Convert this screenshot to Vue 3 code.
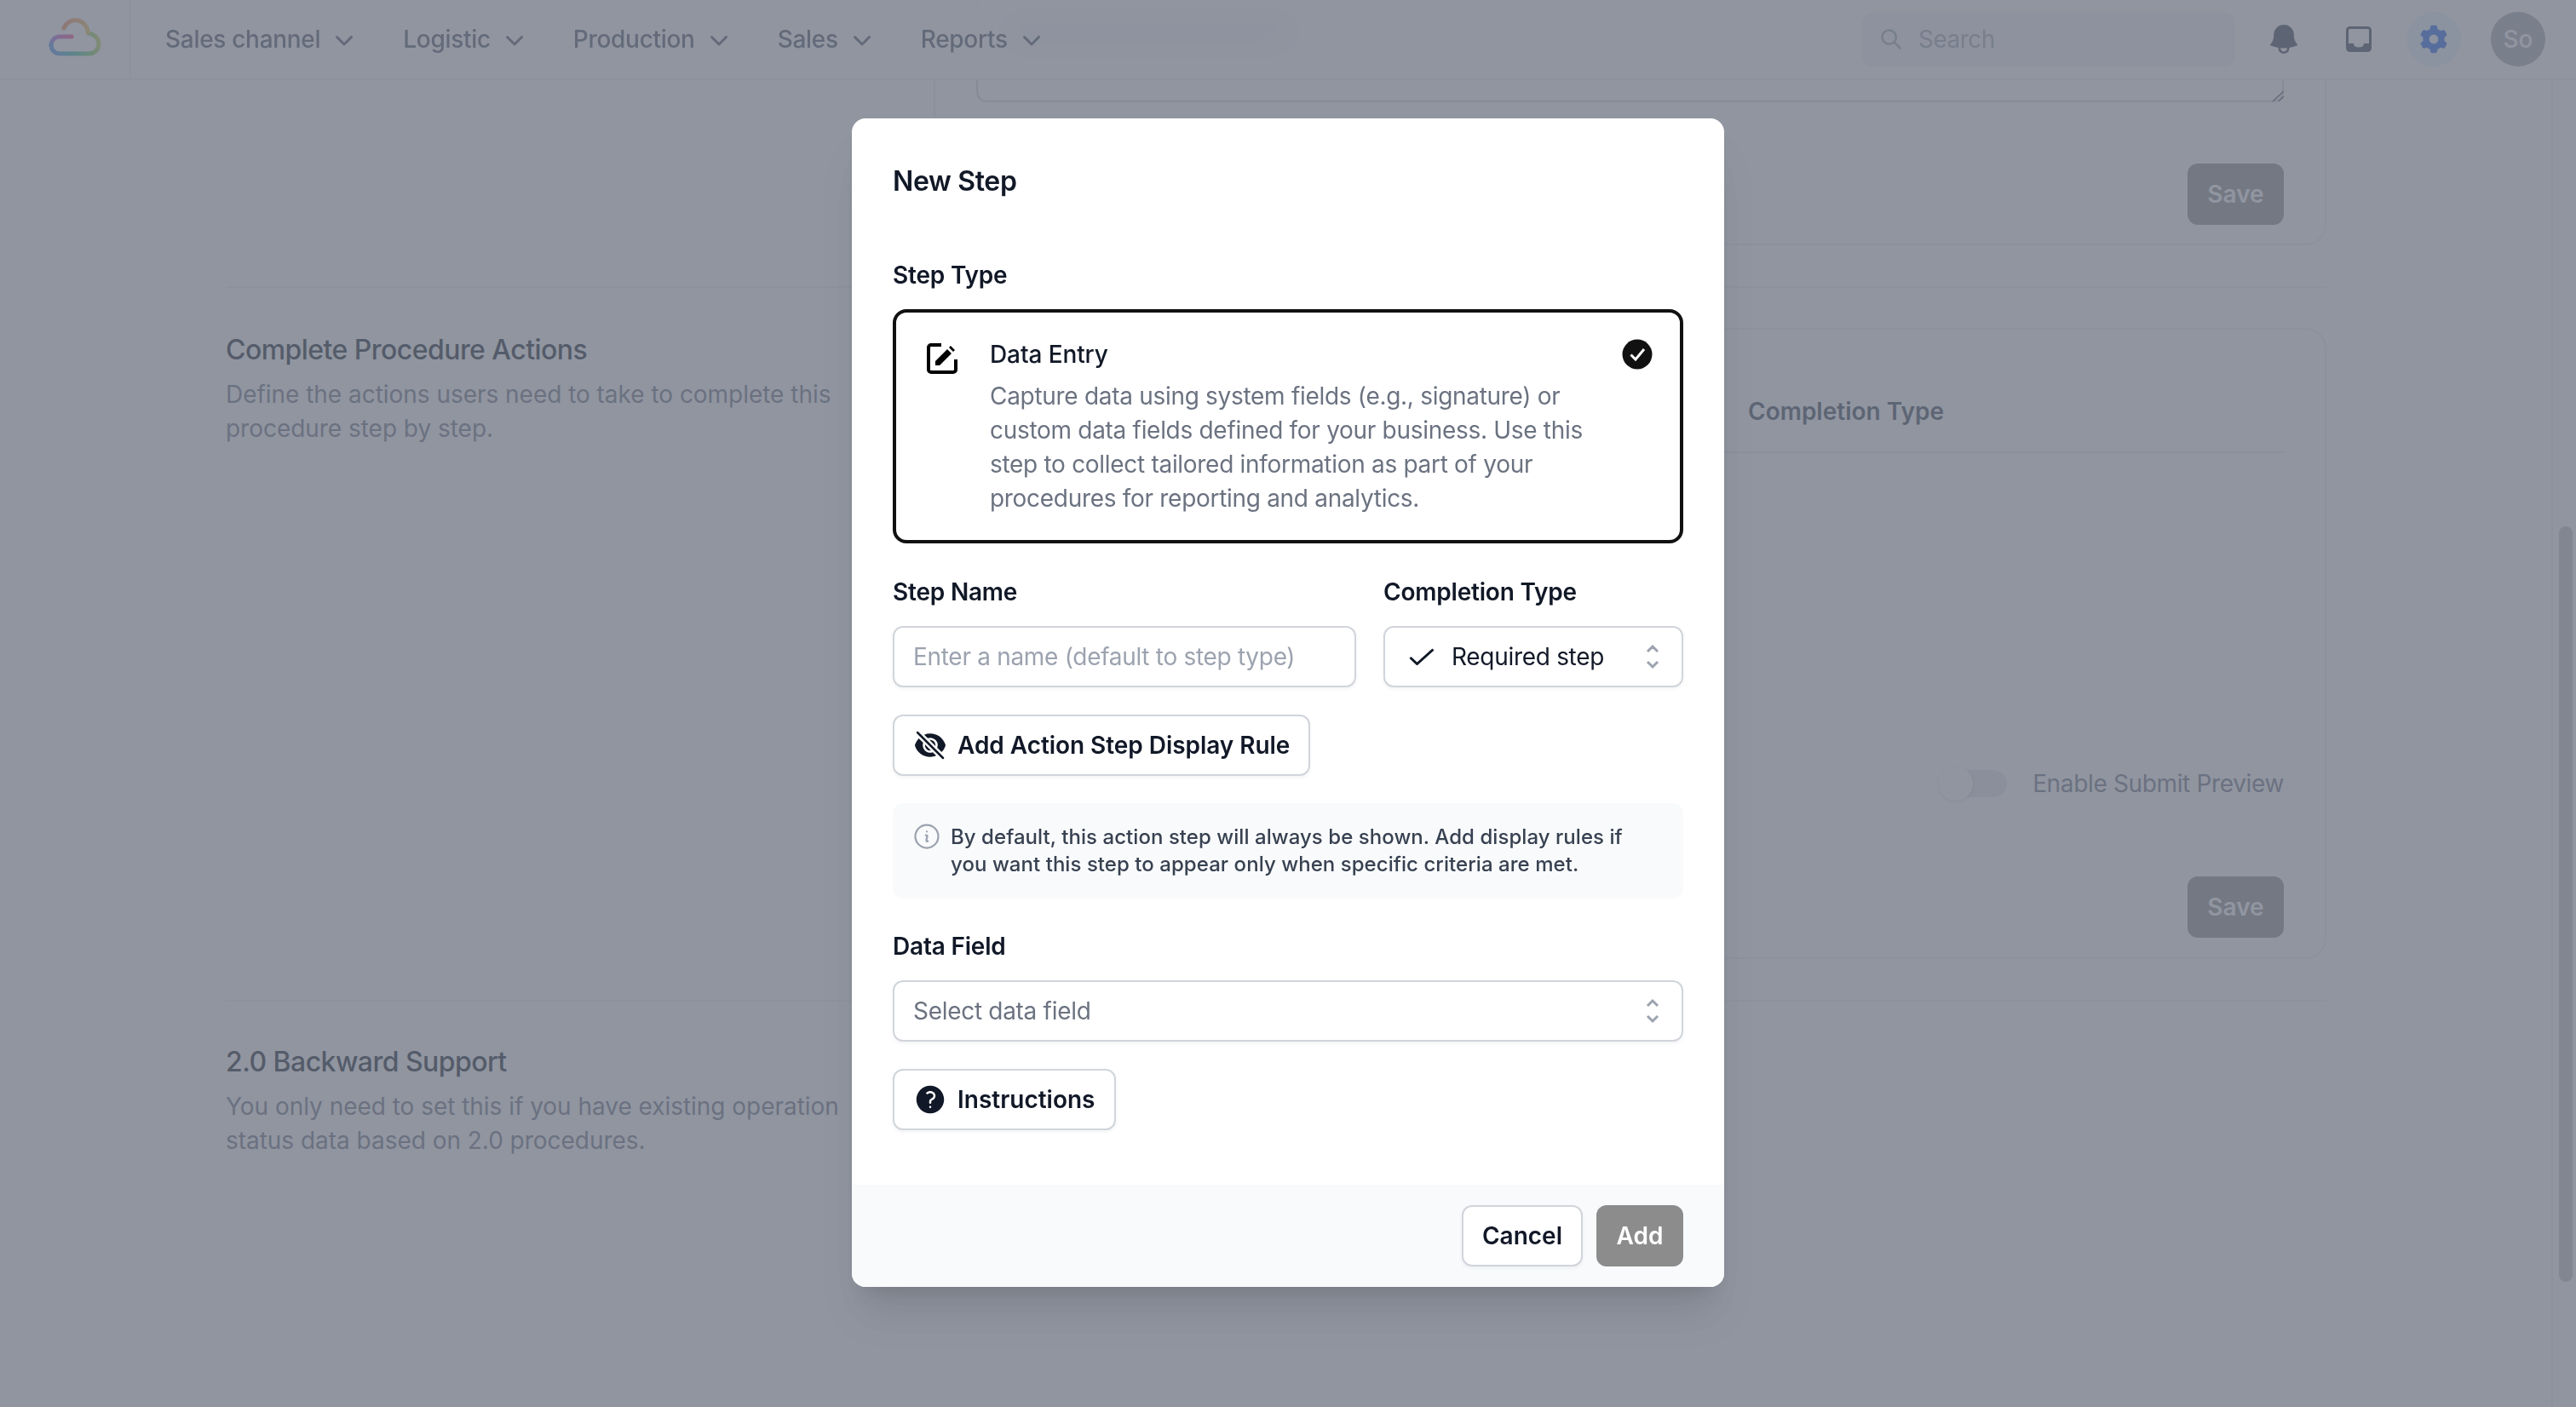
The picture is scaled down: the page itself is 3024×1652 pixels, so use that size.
<template>
  <div class="page">
    <header class="topbar">
      <div class="logo-cell">
        <svg class="logo" width="68" height="48" viewBox="0 0 68 48" fill="none" stroke-width="5" stroke-linecap="round">
          <defs>
            <linearGradient id="barGrad" x1="30" y1="23" x2="2" y2="33" gradientUnits="userSpaceOnUse">
              <stop offset="0" stop-color="#ff3f86" />
              <stop offset="0.6" stop-color="#c55fd0" />
              <stop offset="1" stop-color="#6f8df0" />
            </linearGradient>
            <linearGradient id="bottomGrad" x1="4" y1="43" x2="62" y2="30" gradientUnits="userSpaceOnUse">
              <stop offset="0" stop-color="#4f8ff0" />
              <stop offset="0.45" stop-color="#35c0a0" />
              <stop offset="0.8" stop-color="#7fd060" />
              <stop offset="1" stop-color="#d5d35a" />
            </linearGradient>
            <linearGradient id="topGrad" x1="17" y1="13" x2="46" y2="18" gradientUnits="userSpaceOnUse">
              <stop offset="0" stop-color="#f88a5a" />
              <stop offset="1" stop-color="#f2c15a" />
            </linearGradient>
          </defs>
          <path d="M27 23H13a10 10 0 0 0-10 10" stroke="url(#barGrad)" />
          <path d="M3 33a10 10 0 0 0 10 10H48a11 11 0 0 0 11-11c0-7-5-12-12-13" stroke="url(#bottomGrad)" />
          <path d="M46 18A14.500 14.500 0 0 0 18 13" stroke="url(#topGrad)" />
        </svg>
      </div>
      <nav class="nav-links">
        <a v-for="item in navItems" :key="item" class="nav-link">
          {{ item }}
          <svg width="40" height="40" viewBox="0 0 20 20" fill="currentColor">
            <path fill-rule="evenodd" clip-rule="evenodd" d="M5.220 8.220a.75.75 0 0 1 1.060 0L10 11.940l3.720-3.720a.75.75 0 1 1 1.060 1.060l-4.250 4.250a.75.75 0 0 1-1.060 0L5.220 9.280a.75.75 0 0 1 0-1.060Z" />
          </svg>
        </a>
      </nav>
      <div class="top-right">
        <div class="search">
          <svg width="28" height="28" viewBox="0 0 24 24" fill="none" stroke="currentColor" stroke-width="2.200">
            <circle cx="10" cy="10" r="7" />
            <path d="M15.200 15.200 21 21" stroke-linecap="round" />
          </svg>
          <span>Search</span>
        </div>
        <svg class="bell" width="42" height="42" viewBox="0 0 24 24" fill="currentColor">
          <path fill-rule="evenodd" clip-rule="evenodd" d="M5.250 9a6.750 6.750 0 0 1 13.500 0v.75c0 2.123.8 4.057 2.118 5.520a.75.75 0 0 1-.297 1.206c-1.544.57-3.160.99-4.831 1.243a3.750 3.750 0 1 1-7.480 0 24.585 24.585 0 0 1-4.831-1.244.75.75 0 0 1-.298-1.205A8.217 8.217 0 0 0 5.250 9.750V9Zm4.502 8.900a2.250 2.250 0 1 0 4.496 0 25.057 25.057 0 0 1-4.496 0Z" />
        </svg>
        <svg class="inbox" width="30" height="30" viewBox="0 0 30 30" fill="none">
          <rect x="1.500" y="1.500" width="27" height="27" rx="3" stroke="currentColor" stroke-width="3" />
          <path d="M2 20h7c0 3 2 4.500 6 4.500s6-1.500 6-4.500h7v8H2z" fill="currentColor" />
        </svg>
        <div class="gear-wrap">
          <svg width="36" height="36" viewBox="0 0 20 20" fill="currentColor">
            <path fill-rule="evenodd" clip-rule="evenodd" d="M7.840 1.804A1 1 0 0 1 8.820 1h2.360a1 1 0 0 1 .98.804l.331 1.652a6.993 6.993 0 0 1 1.929 1.115l1.598-.54a1 1 0 0 1 1.186.447l1.180 2.044a1 1 0 0 1-.205 1.251l-1.267 1.113a7.047 7.047 0 0 1 0 2.228l1.267 1.113a1 1 0 0 1 .206 1.250l-1.180 2.045a1 1 0 0 1-1.187.447l-1.598-.54a6.993 6.993 0 0 1-1.929 1.115l-.33 1.652a1 1 0 0 1-.98.804H8.820a1 1 0 0 1-.98-.804l-.331-1.652a6.993 6.993 0 0 1-1.929-1.115l-1.598.54a1 1 0 0 1-1.186-.447l-1.180-2.044a1 1 0 0 1 .205-1.251l1.267-1.114a7.050 7.050 0 0 1 0-2.227L1.821 7.773a1 1 0 0 1-.206-1.250l1.180-2.045a1 1 0 0 1 1.187-.447l1.598.54A6.992 6.992 0 0 1 7.510 3.456l.33-1.652ZM10 13a3 3 0 1 0 0-6 3 3 0 0 0 0 6Z" />
          </svg>
        </div>
        <div class="avatar">So</div>
      </div>
    </header>

    <div class="main">
      <div class="content">
        <section class="section">
          <div></div>
          <div class="card top-card">
            <div class="textarea-wrap">
              <textarea class="textarea" readonly></textarea>
              <span class="hidden-line"></span>
              <svg class="resize-handle" width="14" height="14" viewBox="0 0 14 14" fill="none" stroke="#4b5563" stroke-width="1.500">
                <path d="M1 13 14 1M8 13l6-6" />
              </svg>
            </div>
            <div class="save-row"><button class="save">Save</button></div>
          </div>
        </section>

        <section class="section">
          <div class="actions-text">
            <h3 class="section-title">Complete Procedure Actions</h3>
            <p class="section-desc">Define the actions users need to take to complete this procedure step by step.</p>
          </div>
          <div class="card steps-card">
            <div class="table-head"><span>Completion Type</span></div>
            <div class="preview-row">
              <span class="toggle"><span class="knob"></span></span>
              <span>Enable Submit Preview</span>
            </div>
            <div class="save-row steps-save"><button class="save">Save</button></div>
          </div>
        </section>

        <section class="section last">
          <div>
            <h3 class="section-title">2.0 Backward Support</h3>
            <p class="section-desc">You only need to set this if you have existing operation status data based on 2.0 procedures.</p>
          </div>
          <div></div>
        </section>
      </div>
      <div class="scroll-track"><div class="scroll-thumb"></div></div>
    </div>

    <div class="overlay">
      <div class="modal">
        <div class="modal-body">
          <h2 class="modal-title">New Step</h2>

          <label class="label step-type-label">Step Type</label>
          <div class="type-card">
            <svg class="type-icon" width="36" height="36" viewBox="0 0 36 36" fill="none">
              <path d="M17 2H5a3 3 0 0 0-3 3v26a3 3 0 0 0 3 3h26a3 3 0 0 0 3-3V19" stroke="#000" stroke-width="4" />
              <path d="M10 26v-5L24 7l5 5-14 14zM26 5l2-2 5 5-2 2z" fill="#000" />
            </svg>
            <div class="type-text">
              <div class="type-name">Data Entry</div>
              <p class="type-desc">Capture data using system fields (e.g., signature) or custom data fields defined for your business. Use this step to collect tailored information as part of your procedures for reporting and analytics.</p>
            </div>
            <svg class="type-check" width="36" height="36" viewBox="0 0 36 36">
              <circle cx="18" cy="18" r="17.500" fill="#111" />
              <path d="M10.500 18.500l5.500 5.500 10-12" fill="none" stroke="#fff" stroke-width="3" />
            </svg>
          </div>

          <div class="field-row">
            <div>
              <label class="label">Step Name</label>
              <input class="input" placeholder="Enter a name (default to step type)" />
            </div>
            <div>
              <label class="label">Completion Type</label>
              <div class="input select">
                <svg class="req-check" width="30" height="20" viewBox="0 0 30 20" fill="none" stroke="#111827" stroke-width="3">
                  <path d="M1.500 11l8 7.500L28.500 1.500" />
                </svg>
                <span class="select-value">Required step</span>
                <svg class="updown" width="16" height="32" viewBox="0 0 16 32" fill="none" stroke="#9ca3af" stroke-width="3">
                  <path d="M2 10l6-6 6 6M2 22l6 6 6-6" />
                </svg>
              </div>
            </div>
          </div>

          <button class="btn rule-btn">
            <svg width="40" height="40" viewBox="0 0 24 24" fill="#111827">
              <path d="M3.530 2.470a.75.75 0 0 0-1.060 1.060l18 18a.75.75 0 1 0 1.060-1.060l-18-18ZM22.676 12.553a11.249 11.249 0 0 1-2.631 4.310l-3.099-3.099a5.250 5.250 0 0 0-6.710-6.710L7.759 4.577a11.217 11.217 0 0 1 4.242-.827c4.970 0 9.185 3.223 10.675 7.690.12.362.12.752 0 1.113Z" />
              <path d="M15.750 12c0 .18-.013.357-.037.53l-4.244-4.243A3.750 3.750 0 0 1 15.750 12ZM12.530 15.713l-4.243-4.244a3.750 3.750 0 0 0 4.243 4.243Z" />
              <path d="M6.750 12c0-.619.107-1.213.304-1.764l-3.100-3.100a11.250 11.250 0 0 0-2.630 4.310c-.12.362-.12.752 0 1.114 1.489 4.467 5.704 7.690 10.675 7.690 1.500 0 2.933-.294 4.242-.827l-2.477-2.477A5.250 5.250 0 0 1 6.750 12Z" />
            </svg>
            Add Action Step Display Rule
          </button>

          <div class="info">
            <svg width="36" height="36" viewBox="0 0 24 24" fill="none" stroke="#9ca3af" stroke-width="1.500" stroke-linecap="round" stroke-linejoin="round">
              <path d="m11.250 11.250.041-.02a.75.75 0 0 1 1.063.852l-.708 2.836a.75.75 0 0 0 1.063.853l.041-.021M21 12a9 9 0 1 1-18 0 9 9 0 0 1 18 0Zm-9-3.750h.008v.008H12V8.250Z" />
            </svg>
            <p>By default, this action step will always be shown. Add display rules if you want this step to appear only when specific criteria are met.</p>
          </div>

          <label class="label data-label">Data Field</label>
          <div class="input select data-select">
            <span>Select data field</span>
            <svg class="updown" width="16" height="32" viewBox="0 0 16 32" fill="none" stroke="#9ca3af" stroke-width="3">
              <path d="M2 10l6-6 6 6M2 22l6 6 6-6" />
            </svg>
          </div>

          <button class="btn help-btn">
            <svg width="40" height="40" viewBox="0 0 24 24" fill="#111827">
              <path fill-rule="evenodd" clip-rule="evenodd" d="M2.250 12c0-5.385 4.365-9.750 9.750-9.750s9.750 4.365 9.750 9.750-4.365 9.750-9.750 9.750S2.250 17.385 2.250 12Zm11.378-3.917c-.89-.777-2.366-.777-3.255 0a.75.75 0 0 1-.988-1.129c1.454-1.272 3.776-1.272 5.230 0 1.513 1.324 1.513 3.518 0 4.842a3.750 3.750 0 0 1-.837.552c-.676.328-1.028.774-1.028 1.152v.75a.75.75 0 0 1-1.500 0v-.75c0-1.279 1.060-2.107 1.875-2.502.182-.088.351-.199.503-.331.83-.727.83-1.857 0-2.584ZM12 18a.75.75 0 1 0 0-1.500.75.75 0 0 0 0 1.500Z" />
            </svg>
            Instructions
          </button>
        </div>
        <div class="modal-footer">
          <button class="btn cancel">Cancel</button>
          <button class="add">Add</button>
        </div>
      </div>
    </div>
  </div>
</template>

<script setup>
const navItems = ["Sales channel", "Logistic", "Production", "Sales", "Reports"];
</script>

<style>
html,
body {
  margin: 0;
  overflow: hidden;
}
</style>

<style scoped>
* {
  box-sizing: border-box;
}

.page {
  position: relative;
  width: 3024px;
  height: 1652px;
  overflow: hidden;
  background: #fff;
  font-family: Inter, "Noto Sans", sans-serif;
  font-size: 28px;
  line-height: 40px;
  color: #111827;
}

.topbar {
  position: absolute;
  top: 0;
  left: 0;
  right: 0;
  z-index: 2;
  height: 94px;
  display: flex;
  align-items: center;
  border-bottom: 2px solid #eceef1;
  background: rgba(255, 255, 255, 0.82);
  backdrop-filter: blur(20px);
}

.logo-cell {
  width: 154px;
  height: 100%;
  padding: 20px 0 0 57px;
  border-right: 2px solid #eceef1;
}

.logo {
  display: block;
}

.nav-links {
  display: flex;
  gap: 49px;
  margin-left: 40px;
}

.nav-link {
  display: flex;
  align-items: center;
  gap: 8px;
  color: #4b5563;
  font-weight: 500;
  letter-spacing: -0.3px;
}

.top-right {
  display: flex;
  align-items: center;
  margin-left: auto;
  padding-right: 36px;
}

.search {
  display: flex;
  align-items: center;
  gap: 18px;
  width: 438px;
  height: 63px;
  padding-left: 20px;
  margin-right: 36px;
  border-radius: 12px;
  background: #f3f4f6;
  color: #9ca3af;
  letter-spacing: -0.5px;
}

.bell {
  color: #374151;
}

.inbox {
  margin-left: 52px;
  color: #374151;
}

.gear-wrap {
  display: flex;
  align-items: center;
  justify-content: center;
  width: 64px;
  height: 64px;
  margin-left: 41px;
  border-radius: 50%;
  background: #eff6ff;
  color: #1c62f0;
}

.avatar {
  display: flex;
  align-items: center;
  justify-content: center;
  width: 64px;
  height: 64px;
  margin-left: 35px;
  border-radius: 50%;
  background: #a6a6b0;
  color: #fff;
  font-weight: 500;
}

.main {
  display: flex;
  height: 100%;
}

.content {
  flex: 1;
  margin-top: -120px;
  padding: 0 264px 0 265px;
}

.section {
  display: grid;
  grid-template-columns: 783px 1fr;
  column-gap: 48px;
  padding: 47px 0 48px;
  border-bottom: 2px solid #f0f1f3;
}

.section:first-child {
  padding-top: 0;
}

.section.last {
  border-bottom: 0;
}

.actions-text {
  margin-top: 2px;
}

.section-title {
  margin: 0;
  font-size: 32px;
  line-height: 48px;
  font-weight: 500;
  letter-spacing: -0.55px;
}

.section-desc {
  margin: 8px 0 0;
  color: #6b7280;
  letter-spacing: -0.03px;
}

.card {
  border: 2px solid #eceef1;
  border-radius: 24px;
  padding: 0 48px;
}

.top-card {
  padding-top: 58px;
  padding-bottom: 22px;
}

.textarea-wrap {
  position: relative;
  height: 180px;
}

.textarea {
  display: block;
  width: 100%;
  height: 100%;
  border: 2px solid #d1d5db;
  border-radius: 12px;
  background: #fff;
  outline: none;
  resize: none;
}

.hidden-line {
  position: absolute;
  left: 32px;
  top: 88px;
  width: 340px;
  height: 22px;
  background: #9ca3af;
}

.resize-handle {
  position: absolute;
  right: 0;
  bottom: 0;
}

.save-row {
  display: flex;
  justify-content: flex-end;
  margin-top: 72px;
}

.save {
  width: 113px;
  height: 72px;
  padding: 0;
  border: 0;
  border-radius: 12px;
  background: #8c8c8c;
  color: #fff;
  font: 600 28px/40px Inter, sans-serif;
}

.steps-card {
  padding-top: 48px;
  padding-bottom: 23px;
}

.table-head {
  height: 97px;
  padding-left: 906px;
  padding-top: 28px;
  border-bottom: 2px solid #e5e7eb;
  font-weight: 600;
  color: #374151;
}

.preview-row {
  display: flex;
  align-items: center;
  justify-content: flex-end;
  gap: 30px;
  margin-top: 368px;
  color: #6b7280;
  letter-spacing: -0.35px;
}

.toggle {
  position: relative;
  width: 76px;
  height: 32px;
  border-radius: 16px;
  background: #e5e7eb;
}

.knob {
  position: absolute;
  left: -4px;
  top: -4px;
  width: 40px;
  height: 40px;
  border-radius: 50%;
  background: #fff;
  box-shadow: 0 1px 4px rgba(0, 0, 0, 0.15);
}

.steps-save {
  margin-top: 89px;
}

.scroll-track {
  width: 29px;
  margin-top: 94px;
  padding: 524px 6px 0 7px;
  border-left: 2px solid #eceef1;
}

.scroll-thumb {
  width: 16px;
  height: 887px;
  border-radius: 8px;
  background: #c1c1c1;
}

.overlay {
  position: absolute;
  inset: 0;
  z-index: 3;
  display: flex;
  align-items: center;
  justify-content: center;
  padding-bottom: 2px;
  background: rgba(107, 114, 128, 0.75);
}

.modal {
  width: 1024px;
  border-radius: 16px;
  overflow: hidden;
  background: #fff;
  box-shadow: 0 40px 50px -10px rgba(0, 0, 0, 0.1), 0 16px 20px -12px rgba(0, 0, 0, 0.1);
}

.modal-body {
  padding: 50px 48px 64px;
}

.modal-title {
  margin: 0;
  font-size: 32px;
  line-height: 48px;
  font-weight: 600;
  letter-spacing: -0.35px;
}

.label {
  display: block;
  font-weight: 600;
  letter-spacing: -0.2px;
}

.step-type-label {
  margin-top: 66px;
}

.type-card {
  display: flex;
  align-items: flex-start;
  height: 275px;
  margin-top: 20px;
  padding: 29px 32px 0 36px;
  border: 4px solid #111;
  border-radius: 16px;
}

.type-icon {
  margin-top: 7px;
  flex: none;
}

.type-text {
  width: 720px;
  margin-left: 38px;
  letter-spacing: -0.3px;
}

.type-name {
  font-weight: 500;
  letter-spacing: -0.1px;
}

.type-desc {
  margin: 9px 0 0;
  color: #6b7280;
}

.type-check {
  margin-left: auto;
  margin-top: 2px;
}

.field-row {
  display: grid;
  grid-template-columns: 544px 352px;
  column-gap: 32px;
  margin-top: 37px;
}

.input {
  display: block;
  width: 100%;
  height: 72px;
  margin-top: 20px;
  padding: 0 22px;
  border: 2px solid #d1d5db;
  border-radius: 12px;
  background: #fff;
  box-shadow: 0 2px 4px rgba(0, 0, 0, 0.05);
  font: 400 28px/40px Inter, sans-serif;
  letter-spacing: -0.3px;
  color: #111827;
  outline: none;
}

.input::placeholder {
  color: #9ca3af;
  opacity: 1;
}

.select {
  display: flex;
  align-items: center;
  padding-left: 28px;
  padding-right: 26px;
}

.select-value {
  margin-left: 20px;
}

.updown {
  margin-left: auto;
}

.btn {
  display: inline-flex;
  align-items: center;
  gap: 12px;
  height: 72px;
  border: 2px solid #d1d5db;
  border-radius: 12px;
  background: #fff;
  box-shadow: 0 2px 4px rgba(0, 0, 0, 0.05);
  font: 600 28px/40px Inter, sans-serif;
  color: #111827;
}

.rule-btn {
  margin-top: 32px;
  padding: 0 22px;
  letter-spacing: -0.05px;
}

.info {
  display: flex;
  gap: 10px;
  height: 112px;
  margin-top: 32px;
  padding: 21px 22px 0;
  border-radius: 12px;
  background: #f9fafb;
  color: #374151;
}

.info p {
  width: 810px;
  margin: 3px 0 0;
  font-size: 24px;
  line-height: 32px;
  font-weight: 500;
  letter-spacing: 0.05px;
}

.info svg {
  flex: none;
}

.data-label {
  margin-top: 36px;
}

.data-select {
  margin-top: 20px;
  padding-left: 22px;
  color: #6b7280;
}

.help-btn {
  margin-top: 32px;
  padding: 0 22px;
}

.modal-footer {
  display: flex;
  justify-content: flex-end;
  gap: 16px;
  padding: 24px 48px;
  background: #f9fafb;
}

.cancel {
  padding: 0 22px;
}

.add {
  width: 102px;
  height: 72px;
  padding: 0;
  border: 0;
  border-radius: 12px;
  background: #8c8c8c;
  color: #fff;
  font: 600 28px/40px Inter, sans-serif;
}
</style>
